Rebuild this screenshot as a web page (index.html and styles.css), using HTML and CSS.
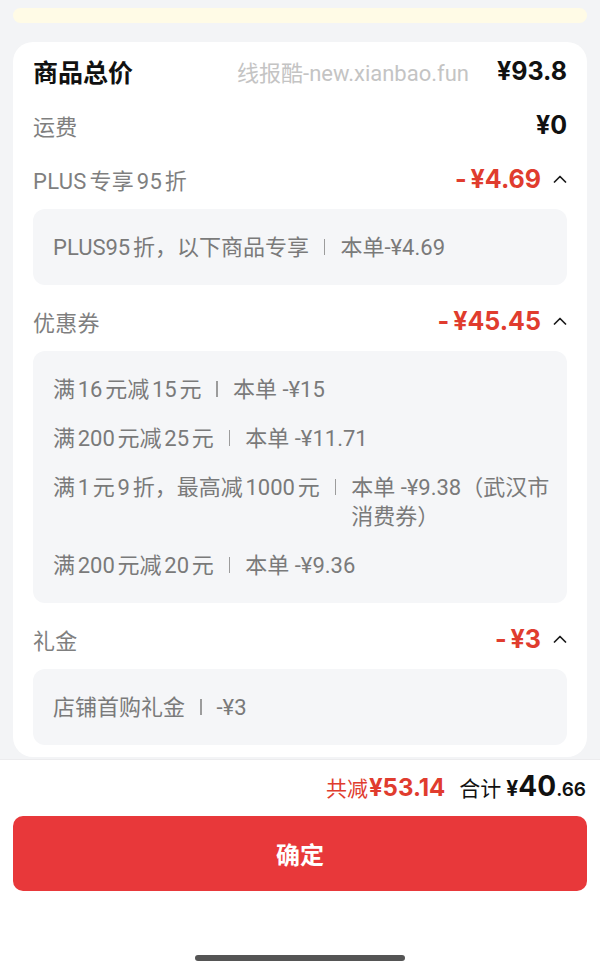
FILE: index.html
```html
<!DOCTYPE html>
<html lang="zh-CN">
<head>
<meta charset="utf-8">
<title>价格明细</title>
<link rel="stylesheet" href="styles.css">
</head>
<body>
<div class="page">
  <div class="prev-card"></div>
  <section class="card">
    <div class="row">
      <span class="title">商品总价</span>
      <span class="watermark">线报酷-new.xianbao.fun</span>
      <span class="amount">¥93.8</span>
    </div>
    <div class="row">
      <span class="label">运费</span>
      <span class="amount">¥0</span>
    </div>
    <div class="row">
      <span class="label">PLUS专享95折</span>
      <span class="amount-group">
        <span class="amount red"><span class="minus">-</span>¥4.69</span>
        <svg class="chevron" viewBox="0 0 14 8" aria-hidden="true"><polyline points="1.5,7 7,1.5 12.5,7"/></svg>
      </span>
    </div>
    <div class="detail">
      <div class="detail-item"><span class="d-left">PLUS95折，以下商品专享</span><span class="sep"></span><span class="d-right">本单-¥4.69</span></div>
    </div>
    <div class="row">
      <span class="label">优惠券</span>
      <span class="amount-group">
        <span class="amount red"><span class="minus">-</span>¥45.45</span>
        <svg class="chevron" viewBox="0 0 14 8" aria-hidden="true"><polyline points="1.5,7 7,1.5 12.5,7"/></svg>
      </span>
    </div>
    <div class="detail">
      <div class="detail-item"><span class="d-left">满16元减15元</span><span class="sep"></span><span class="d-right">本单 -¥15</span></div>
      <div class="detail-item"><span class="d-left">满200元减25元</span><span class="sep"></span><span class="d-right">本单 -¥11.71</span></div>
      <div class="detail-item"><span class="d-left">满1元9折，最高减1000元</span><span class="sep"></span><span class="d-right">本单 -¥9.38（武汉市消费券）</span></div>
      <div class="detail-item"><span class="d-left">满200元减20元</span><span class="sep"></span><span class="d-right">本单 -¥9.36</span></div>
    </div>
    <div class="row">
      <span class="label">礼金</span>
      <span class="amount-group">
        <span class="amount red"><span class="minus">-</span>¥3</span>
        <svg class="chevron" viewBox="0 0 14 8" aria-hidden="true"><polyline points="1.5,7 7,1.5 12.5,7"/></svg>
      </span>
    </div>
    <div class="detail">
      <div class="detail-item"><span class="d-left">店铺首购礼金</span><span class="sep"></span><span class="d-right">-¥3</span></div>
    </div>
  </section>
  <footer class="footer">
    <div class="summary">
      <span class="sum-label sum-red">共减</span><span class="sum-amt">¥53.14</span>
      <span class="sum-label total-label">合计</span><span class="yen">¥</span><span class="int">40</span><span class="dec">.66</span>
    </div>
    <button class="confirm" type="button">确定</button>
    <div class="home-indicator"></div>
  </footer>
</div>
</body>
</html>
```
FILE: styles.css
```css
html, body {
  margin: 0;
  padding: 0;
}
body {
  width: 600px;
  height: 971px;
  overflow: hidden;
  background: #f3f4f6;
  font-family: Roboto, "Noto Sans CJK SC", sans-serif;
  color: #111;
  text-autospace: normal;
}
.page {
  display: flex;
  flex-direction: column;
  height: 971px;
}
.prev-card {
  margin: 8px 13px 0;
  height: 15px;
  background: #fffbe6;
  border-radius: 8px;
}
.card {
  margin: 19px 13px 0;
  background: #fff;
  border-radius: 20px;
  padding: 11px 20px 12px;
}
.row {
  display: flex;
  align-items: center;
  justify-content: space-between;
  height: 36px;
  margin-top: 18px;
}
.row:first-child {
  margin-top: 0;
}
.title {
  font-family: "Noto Sans CJK SC", sans-serif;
  font-size: 25px;
  font-weight: 700;
  color: #111;
}
.watermark {
  margin-left: auto;
  margin-right: 28px;
  font-size: 22px;
  color: #c4c4c4;
}
.label {
  font-size: 22px;
  color: #7f7f7f;
  letter-spacing: 0.3px;
}
.amount {
  font-family: Inter, "Noto Sans CJK SC", sans-serif;
  font-weight: 700;
  font-size: 25px;
  color: #111;
}
.amount.red {
  color: #e03c2e;
}
.minus {
  margin-right: 4px;
}
.amount-group {
  display: flex;
  align-items: center;
}
.chevron {
  width: 14px;
  height: 8px;
  margin-left: 12px;
  fill: none;
  stroke: #1a1a1a;
  stroke-width: 1.7;
  stroke-linecap: round;
  stroke-linejoin: round;
}
.detail {
  margin-top: 12px;
  background: #f5f6f8;
  border-radius: 12px;
  padding: 24px 16px 23px 20px;
  display: flex;
  flex-direction: column;
  gap: 20px;
  font-size: 22px;
  line-height: 29px;
  color: #7a7a7a;
}
.detail-item {
  display: flex;
  align-items: flex-start;
}
.d-left {
  flex: none;
}
.sep {
  flex: none;
  width: 1.5px;
  height: 16px;
  margin: 6px 15px 0;
  background: #9c9c9c;
}
.d-right {
  flex: 1;
  min-width: 0;
}
.footer {
  flex: 1;
  margin-top: 2px;
  background: #fff;
  border-top: 1px solid #ececee;
  padding: 0 13px;
  display: flex;
  flex-direction: column;
}
.summary {
  display: flex;
  justify-content: flex-end;
  align-items: baseline;
  height: 32px;
  margin-top: 9px;
  padding-right: 1px;
}
.sum-label {
  font-family: "Noto Sans CJK SC", sans-serif;
  font-size: 21px;
}
.sum-red {
  color: #e03c2e;
}
.sum-amt {
  font-family: Inter, sans-serif;
  font-weight: 700;
  font-size: 24px;
  color: #e03c2e;
  margin-left: 1px;
}
.total-label {
  color: #111;
  margin-left: 14px;
  margin-right: 5px;
}
.yen {
  font-family: Inter, sans-serif;
  font-weight: 700;
  font-size: 21px;
}
.int {
  font-family: Inter, sans-serif;
  font-weight: 700;
  font-size: 28px;
}
.dec {
  font-family: Inter, sans-serif;
  font-weight: 600;
  font-size: 19px;
}
.confirm {
  margin-top: 15px;
  height: 75px;
  width: 100%;
  border: none;
  border-radius: 10px;
  background: #e8383a;
  color: #fff;
  font-family: "Noto Sans CJK SC", sans-serif;
  font-size: 24px;
  font-weight: 700;
  padding: 0;
}
.home-indicator {
  align-self: center;
  margin-top: 64px;
  width: 210px;
  height: 6px;
  border-radius: 3px;
  background: #555;
}
```
